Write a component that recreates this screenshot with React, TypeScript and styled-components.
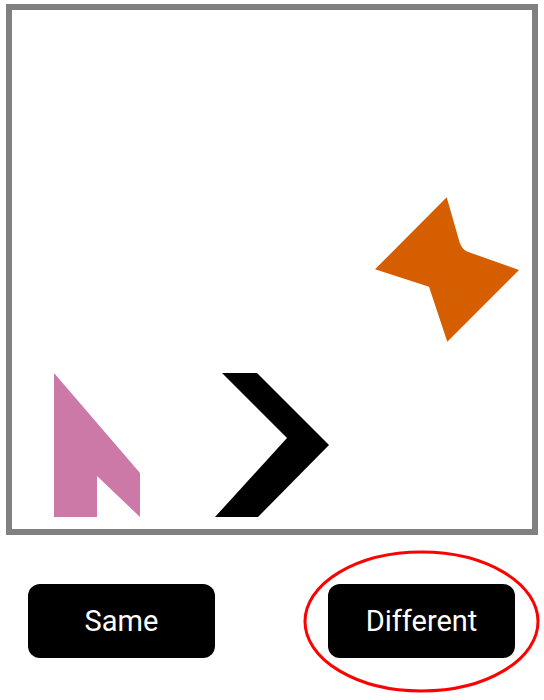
import React from "react";
import styled, { createGlobalStyle } from "styled-components";

const GlobalStyle = createGlobalStyle`
  html, body {
    margin: 0;
    padding: 0;
    background: #ffffff;
    font-family: Roboto, "Liberation Sans", Arial, sans-serif;
  }
`;

const Page = styled.div`
  width: 544px;
  height: 700px;
  padding: 4px 0 0 6px;
  box-sizing: border-box;
  display: flex;
  flex-direction: column;
`;

const Canvas = styled.div`
  width: 520px;
  height: 519px;
  border: 6px solid #808080;
  background: #ffffff;
`;

const ButtonRow = styled.div`
  display: flex;
  gap: 113px;
  padding-left: 22px;
  margin-top: 49px;
`;

const ButtonWrap = styled.div`
  position: relative;
  width: 187px;
  height: 74px;
`;

const ChoiceButton = styled.button`
  width: 100%;
  height: 100%;
  border: none;
  border-radius: 12px;
  background: #000000;
  color: #ffffff;
  font-family: Roboto, "Liberation Sans", Arial, sans-serif;
  font-size: 29px;
  font-weight: 400;
  padding: 0;
  cursor: pointer;
`;

const Highlight = styled.svg`
  position: absolute;
  left: -25px;
  top: -34px;
  width: 237px;
  height: 143px;
  pointer-events: none;
  overflow: visible;
`;

export default function App() {
  return (
    <>
      <GlobalStyle />
      <Page>
        <Canvas>
          <svg width="520" height="519" viewBox="0 0 520 519">
            <polygon
              points="42,363 128,463 128,507 85,466 85,507 42,507"
              fill="#cc79a7"
            />
            <polygon
              points="210,363 245,363 317,435 246,507 203,507 275,428"
              fill="#000000"
            />
            <path
              d="M434.7,187.3 L447.5,232 Q450,239.5 455,241.5 L507,260 L435.3,331.7 L417,276.7 L363,259.3 Z"
              fill="#d55e00"
            />
          </svg>
        </Canvas>
        <ButtonRow>
          <ButtonWrap>
            <ChoiceButton>Same</ChoiceButton>
          </ButtonWrap>
          <ButtonWrap>
            <ChoiceButton>Different</ChoiceButton>
            <Highlight viewBox="0 0 237 143">
              <ellipse
                cx="118.5"
                cy="71.5"
                rx="116.5"
                ry="69.5"
                fill="none"
                stroke="#ff0000"
                strokeWidth="3"
              />
            </Highlight>
          </ButtonWrap>
        </ButtonRow>
      </Page>
    </>
  );
}
